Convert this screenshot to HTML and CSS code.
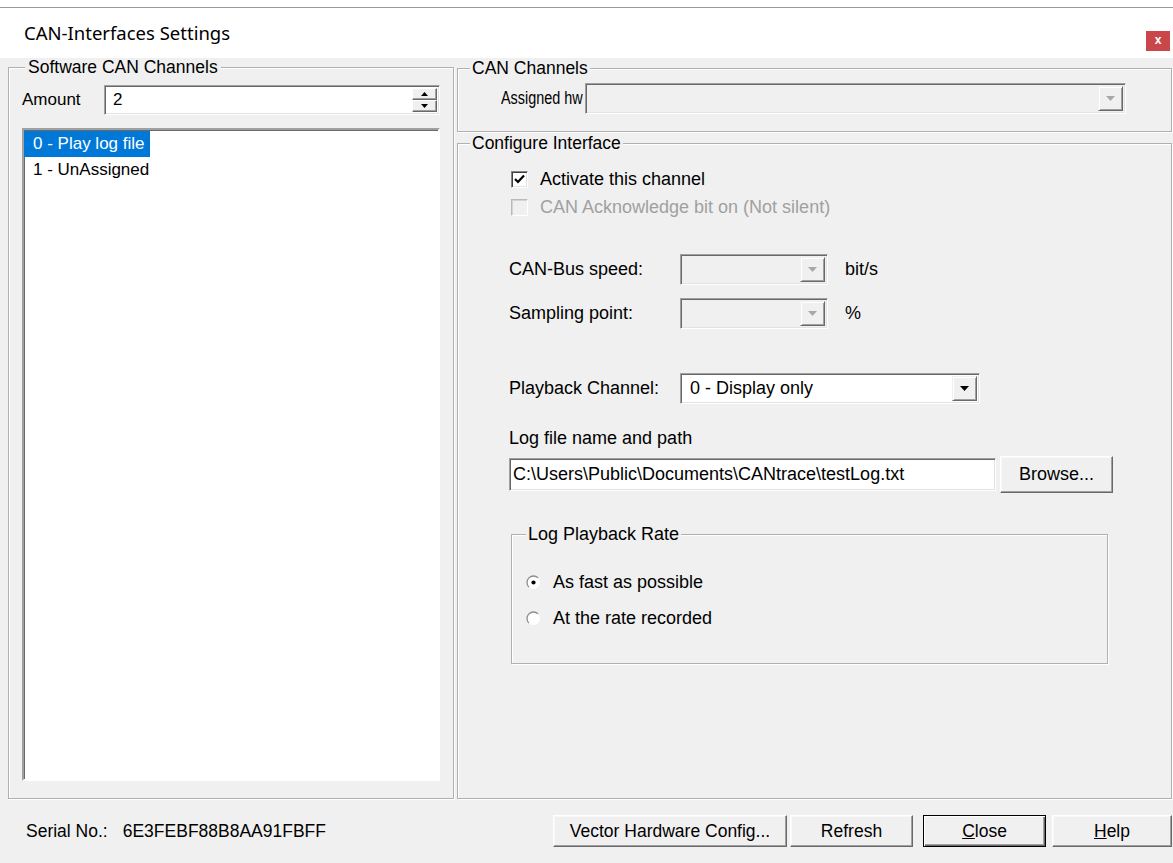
FILE: index.html
```html
<!DOCTYPE html>
<html lang="en">
<head>
<meta charset="utf-8">
<title>CAN-Interfaces Settings</title>
<link rel="stylesheet" href="styles.css">
</head>
<body>
<div class="window">
  <header class="titlebar">
    <span class="title">CAN-Interfaces Settings</span>
    <span class="close-box">x</span>
  </header>

  <main class="client">
    <div class="panels">
      <!-- left: list of software channels -->
      <fieldset class="group sw-group">
        <legend>Software CAN Channels</legend>
        <div class="sw-body">
          <div class="amount-row">
            <span class="amount-label">Amount</span>
            <div class="spin sunken">
              <span class="spin-value">2</span>
              <span class="spin-buttons">
                <span class="spin-btn raised"><svg width="7" height="4" viewBox="0 0 7 4"><path d="M3.5 0L7 4H0z" fill="#000"/></svg></span>
                <span class="spin-btn raised"><svg width="7" height="4" viewBox="0 0 7 4"><path d="M0 0H7L3.5 4z" fill="#000"/></svg></span>
              </span>
            </div>
          </div>
          <ul class="listbox sunken">
            <li class="item selected">0 - Play log file</li>
            <li class="item">1 - UnAssigned</li>
          </ul>
        </div>
      </fieldset>

      <!-- right: hardware assignment and interface setup -->
      <div class="right-col">
        <fieldset class="group hw-group">
          <legend>CAN Channels</legend>
          <div class="hw-body">
            <span class="hw-label"><span class="hw-label-text">Assigned hw</span></span>
            <div class="combo sunken disabled hw-combo">
              <span class="combo-text"></span>
              <span class="drop-btn"><svg width="9" height="5" viewBox="0 0 9 5"><path d="M0 0H9L4.5 5z" fill="#a8a8a8"/></svg></span>
            </div>
          </div>
        </fieldset>

        <fieldset class="group cfg-group">
          <legend>Configure Interface</legend>
          <div class="cfg-body">
            <div class="check-row first">
              <span class="checkbox"><svg width="15" height="15" viewBox="0 0 15 15"><path d="M3 7l3 3 6-6.5" fill="none" stroke="#000" stroke-width="2.2"/></svg></span>
              <span class="check-text">Activate this channel</span>
            </div>
            <div class="check-row">
              <span class="checkbox off"></span>
              <span class="check-text muted">CAN Acknowledge bit on (Not silent)</span>
            </div>

            <div class="field-row bus-row">
              <span class="field-label">CAN-Bus speed:</span>
              <div class="combo sunken disabled small-combo">
                <span class="combo-text"></span>
                <span class="drop-btn"><svg width="9" height="5" viewBox="0 0 9 5"><path d="M0 0H9L4.5 5z" fill="#a8a8a8"/></svg></span>
              </div>
              <span class="unit">bit/s</span>
            </div>
            <div class="field-row sample-row">
              <span class="field-label">Sampling point:</span>
              <div class="combo sunken disabled small-combo">
                <span class="combo-text"></span>
                <span class="drop-btn"><svg width="9" height="5" viewBox="0 0 9 5"><path d="M0 0H9L4.5 5z" fill="#a8a8a8"/></svg></span>
              </div>
              <span class="unit">%</span>
            </div>

            <div class="field-row playback-row">
              <span class="field-label">Playback Channel:</span>
              <div class="combo sunken playback-combo">
                <span class="combo-text">0 - Display only</span>
                <span class="drop-btn"><svg width="9" height="5" viewBox="0 0 9 5"><path d="M0 0H9L4.5 5z" fill="#000"/></svg></span>
              </div>
            </div>

            <div class="path-label">Log file name and path</div>
            <div class="path-row">
              <div class="path-input sunken">C:\Users\Public\Documents\CANtrace\testLog.txt</div>
              <button class="btn browse-btn">Browse...</button>
            </div>

            <fieldset class="group rate-group">
              <legend>Log Playback Rate</legend>
              <div class="rate-body">
                <div class="radio-row">
                  <svg class="radio" width="15" height="15" viewBox="0 0 15 15">
                    <circle cx="7.5" cy="7.5" r="6.5" fill="#fff"/>
                    <path d="M2.9 12.1A6.5 6.5 0 0 1 12.1 2.9" fill="none" stroke="#8d8d8d" stroke-width="1.3"/>
                    <circle cx="7.5" cy="7.5" r="2.1" fill="#000"/>
                  </svg>
                  <span>As fast as possible</span>
                </div>
                <div class="radio-row">
                  <svg class="radio" width="15" height="15" viewBox="0 0 15 15">
                    <circle cx="7.5" cy="7.5" r="6.5" fill="#fff"/>
                    <path d="M2.9 12.1A6.5 6.5 0 0 1 12.1 2.9" fill="none" stroke="#8d8d8d" stroke-width="1.3"/>
                  </svg>
                  <span>At the rate recorded</span>
                </div>
              </div>
            </fieldset>
          </div>
        </fieldset>
      </div>
    </div>

    <footer class="footer">
      <span class="serial-label">Serial No.:</span>
      <span class="serial-value">6E3FEBF88B8AA91FBFF</span>
      <div class="buttons">
        <button class="btn vector-btn">Vector Hardware Config...</button>
        <button class="btn refresh-btn">Refresh</button>
        <button class="btn close-btn default"><u>C</u>lose</button>
        <button class="btn help-btn"><u>H</u>elp</button>
      </div>
    </footer>
  </main>
</div>
</body>
</html>
```

FILE: styles.css
```css
* {
  box-sizing: border-box;
}

html,
body {
  margin: 0;
  padding: 0;
}

body {
  width: 1173px;
  height: 863px;
  overflow: hidden;
  background: #ffffff;
  color: #000;
  font-family: "Liberation Sans", Arial, sans-serif;
  font-size: 17.5px;
}

/* ---------- window frame ---------- */
.window {
  margin-top: 7px;
  border-top: 1px solid #9a9a9a;
  height: 856px;
  display: flex;
  flex-direction: column;
}

.titlebar {
  height: 50px;
  flex: none;
  background: #fff;
  display: flex;
  align-items: center;
  padding-left: 24px;
  padding-right: 3px;
}

.title {
  font-family: "Noto Sans", "Open Sans", sans-serif;
  font-size: 18.5px;
  margin-top: -2px;
}

.close-box {
  margin-left: auto;
  align-self: flex-start;
  margin-top: 23px;
  width: 24px;
  height: 20px;
  background: #c9474a;
  color: #fff;
  font-family: "Liberation Sans", Arial, sans-serif;
  font-weight: bold;
  font-size: 12px;
  display: flex;
  align-items: center;
  justify-content: center;
  padding-bottom: 2px;
}

.client {
  flex: 1;
  background: #f0f0f0;
  display: flex;
  flex-direction: column;
}

/* ---------- common 3D pieces ---------- */
.sunken {
  border: 1px solid;
  border-color: #a0a0a0 #ffffff #ffffff #a0a0a0;
  box-shadow: inset 1px 1px #696969, inset -1px -1px #e3e3e3;
}

.raised {
  border: 1px solid;
  border-color: #ffffff #696969 #696969 #ffffff;
  box-shadow: inset -1px -1px #a0a0a0;
  background: #f0f0f0;
}

.group {
  margin: 0;
  padding: 0;
  min-width: 0;
  border: 1px solid #b0b0b0;
  box-shadow: inset 1px 1px #ffffff, 1px 1px #ffffff;
}

.group > legend {
  height: 18px;
  line-height: 18px;
  padding: 0 2px;
  background: #f0f0f0;
}

/* ---------- layout ---------- */
.panels {
  display: flex;
  gap: 3px;
  padding-left: 8px;
  height: 741px;
  flex: none;
}

.sw-group {
  width: 446px;
  height: 741px;
  font-size: 17px;
}

.sw-group > legend {
  margin-left: 16px;
  padding: 0 3px;
  font-size: 17.5px;
}

.sw-body {
  height: 722px;
  display: flex;
  flex-direction: column;
  padding: 9px 13px 17px 13px;
}

.amount-row {
  display: flex;
  align-items: center;
  height: 30px;
  flex: none;
}

.amount-label {
  width: 82px;
}

.spin {
  flex: 1;
  height: 30px;
  background: #fff;
  display: flex;
  align-items: stretch;
  padding: 2px;
}

.spin-value {
  flex: 1;
  display: flex;
  align-items: center;
  padding-left: 6px;
}

.spin-buttons {
  width: 25px;
  display: flex;
  flex-direction: column;
}

.spin-btn {
  flex: 1;
  display: flex;
  align-items: center;
  justify-content: center;
}

.listbox {
  flex: 1;
  margin: 13px 0 0;
  padding: 1px 0 0 0;
  list-style: none;
  background: #fff;
  border-width: 2px;
  box-shadow: inset 1px 1px #696969;
}

.item {
  height: 26px;
  line-height: 26px;
  width: fit-content;
  padding: 0 5px 0 9px;
}

.item.selected {
  background: #0078d7;
  color: #fff;
}

.right-col {
  width: 715px;
  display: flex;
  flex-direction: column;
  font-size: 18px;
}

.hw-group {
  margin-top: 1px;
  height: 73px;
  flex: none;
}

.hw-group > legend,
.cfg-group > legend {
  margin-left: 12px;
  font-size: 17.5px;
}

.hw-body {
  display: flex;
  align-items: center;
  padding: 6px 0 0 43px;
}

.hw-label {
  width: 84px;
  white-space: nowrap;
}

/* this caption is drawn condensed */
.hw-label-text {
  display: inline-block;
  transform: scaleX(0.8);
  transform-origin: left center;
}

.combo {
  height: 31px;
  display: flex;
  align-items: stretch;
  padding: 2px;
  background: #fff;
}

.combo.disabled {
  background: #f0f0f0;
}

.combo-text {
  flex: 1;
  display: flex;
  align-items: center;
  padding-left: 8px;
  white-space: nowrap;
}

.drop-btn {
  width: 25px;
  flex: none;
  display: flex;
  align-items: center;
  justify-content: center;
  background: #f0f0f0;
  border: 1px solid;
  border-color: #f0f0f0 #696969 #696969 #f0f0f0;
  box-shadow: inset 1px 1px #fff, inset -1px -1px #a0a0a0;
}

.hw-combo {
  width: 541px;
}

.cfg-group {
  margin-top: 2px;
  height: 665px;
  flex: none;
}

.cfg-body {
  display: flex;
  flex-direction: column;
  padding-left: 51px;
}

.check-row {
  display: flex;
  align-items: center;
  height: 28px;
}

.check-row.first {
  margin-top: 13px;
}

.checkbox {
  width: 17px;
  height: 17px;
  margin-left: 2px;
  background: #fff;
  border: 1px solid;
  border-color: #858585 #ffffff #ffffff #858585;
  box-shadow: inset 1px 1px #404040, inset -1px -1px #e3e3e3;
  display: flex;
  align-items: center;
  justify-content: center;
}

.checkbox.off {
  background: #f0f0f0;
  border-color: #b9b9b9 #ffffff #ffffff #b9b9b9;
  box-shadow: inset 1px 1px #d4d4d4;
}

.check-text {
  margin-left: 12px;
}

.muted {
  color: #a0a0a0;
}

.field-row {
  display: flex;
  align-items: center;
  height: 31px;
}

.bus-row {
  margin-top: 33px;
}

.sample-row {
  margin-top: 13px;
}

.playback-row {
  margin-top: 44px;
}

.field-label {
  width: 171px;
}

.small-combo {
  width: 148px;
}

.unit {
  margin-left: 17px;
}

.playback-combo {
  width: 300px;
}

.playback-combo .combo-text {
  padding-left: 7px;
}

.path-label {
  margin-top: 24px;
  height: 20px;
  line-height: 20px;
}

.path-row {
  margin-top: 8px;
  display: flex;
  align-items: center;
  height: 37px;
}

.path-input {
  width: 487px;
  height: 33px;
  background: #fff;
  padding-left: 3px;
  display: flex;
  align-items: center;
  white-space: nowrap;
}

.btn {
  font-family: "Liberation Sans", Arial, sans-serif;
  font-size: 17.5px;
  color: #000;
  background: #f0f0f0;
  border: 1px solid;
  border-color: #ffffff #696969 #696969 #ffffff;
  box-shadow: inset -1px -1px #a0a0a0, inset 1px 1px #f8f8f8;
  padding: 0;
  margin: 0;
}

.browse-btn {
  width: 113px;
  height: 37px;
  margin-left: 4px;
  font-size: 18px;
}

.rate-group {
  margin-top: 32px;
  margin-left: 2px;
  width: 597px;
  height: 139px;
}

.rate-group > legend {
  margin-left: 14px;
}

.rate-body {
  padding: 21px 0 0 14px;
}

.radio-row {
  display: flex;
  align-items: center;
  height: 36px;
}

.radio {
  margin-right: 12px;
  flex: none;
}

/* ---------- footer ---------- */
.footer {
  flex: 1;
  display: flex;
  align-items: center;
  padding-left: 26px;
  padding-right: 1px;
}

.serial-value {
  margin-left: 15px;
}

.buttons {
  margin-left: auto;
  display: flex;
  align-items: center;
}

.buttons .btn {
  height: 32px;
}

.vector-btn {
  width: 234px;
}

.refresh-btn {
  width: 123px;
  margin-left: 3px;
}

.close-btn {
  width: 123px;
  margin-left: 10px;
}

.help-btn {
  width: 120px;
  margin-left: 6px;
}

.btn.default {
  border-color: #000;
  box-shadow: inset 1px 1px #ffffff, inset -1px -1px #696969, inset -2px -2px #a0a0a0;
}
```
